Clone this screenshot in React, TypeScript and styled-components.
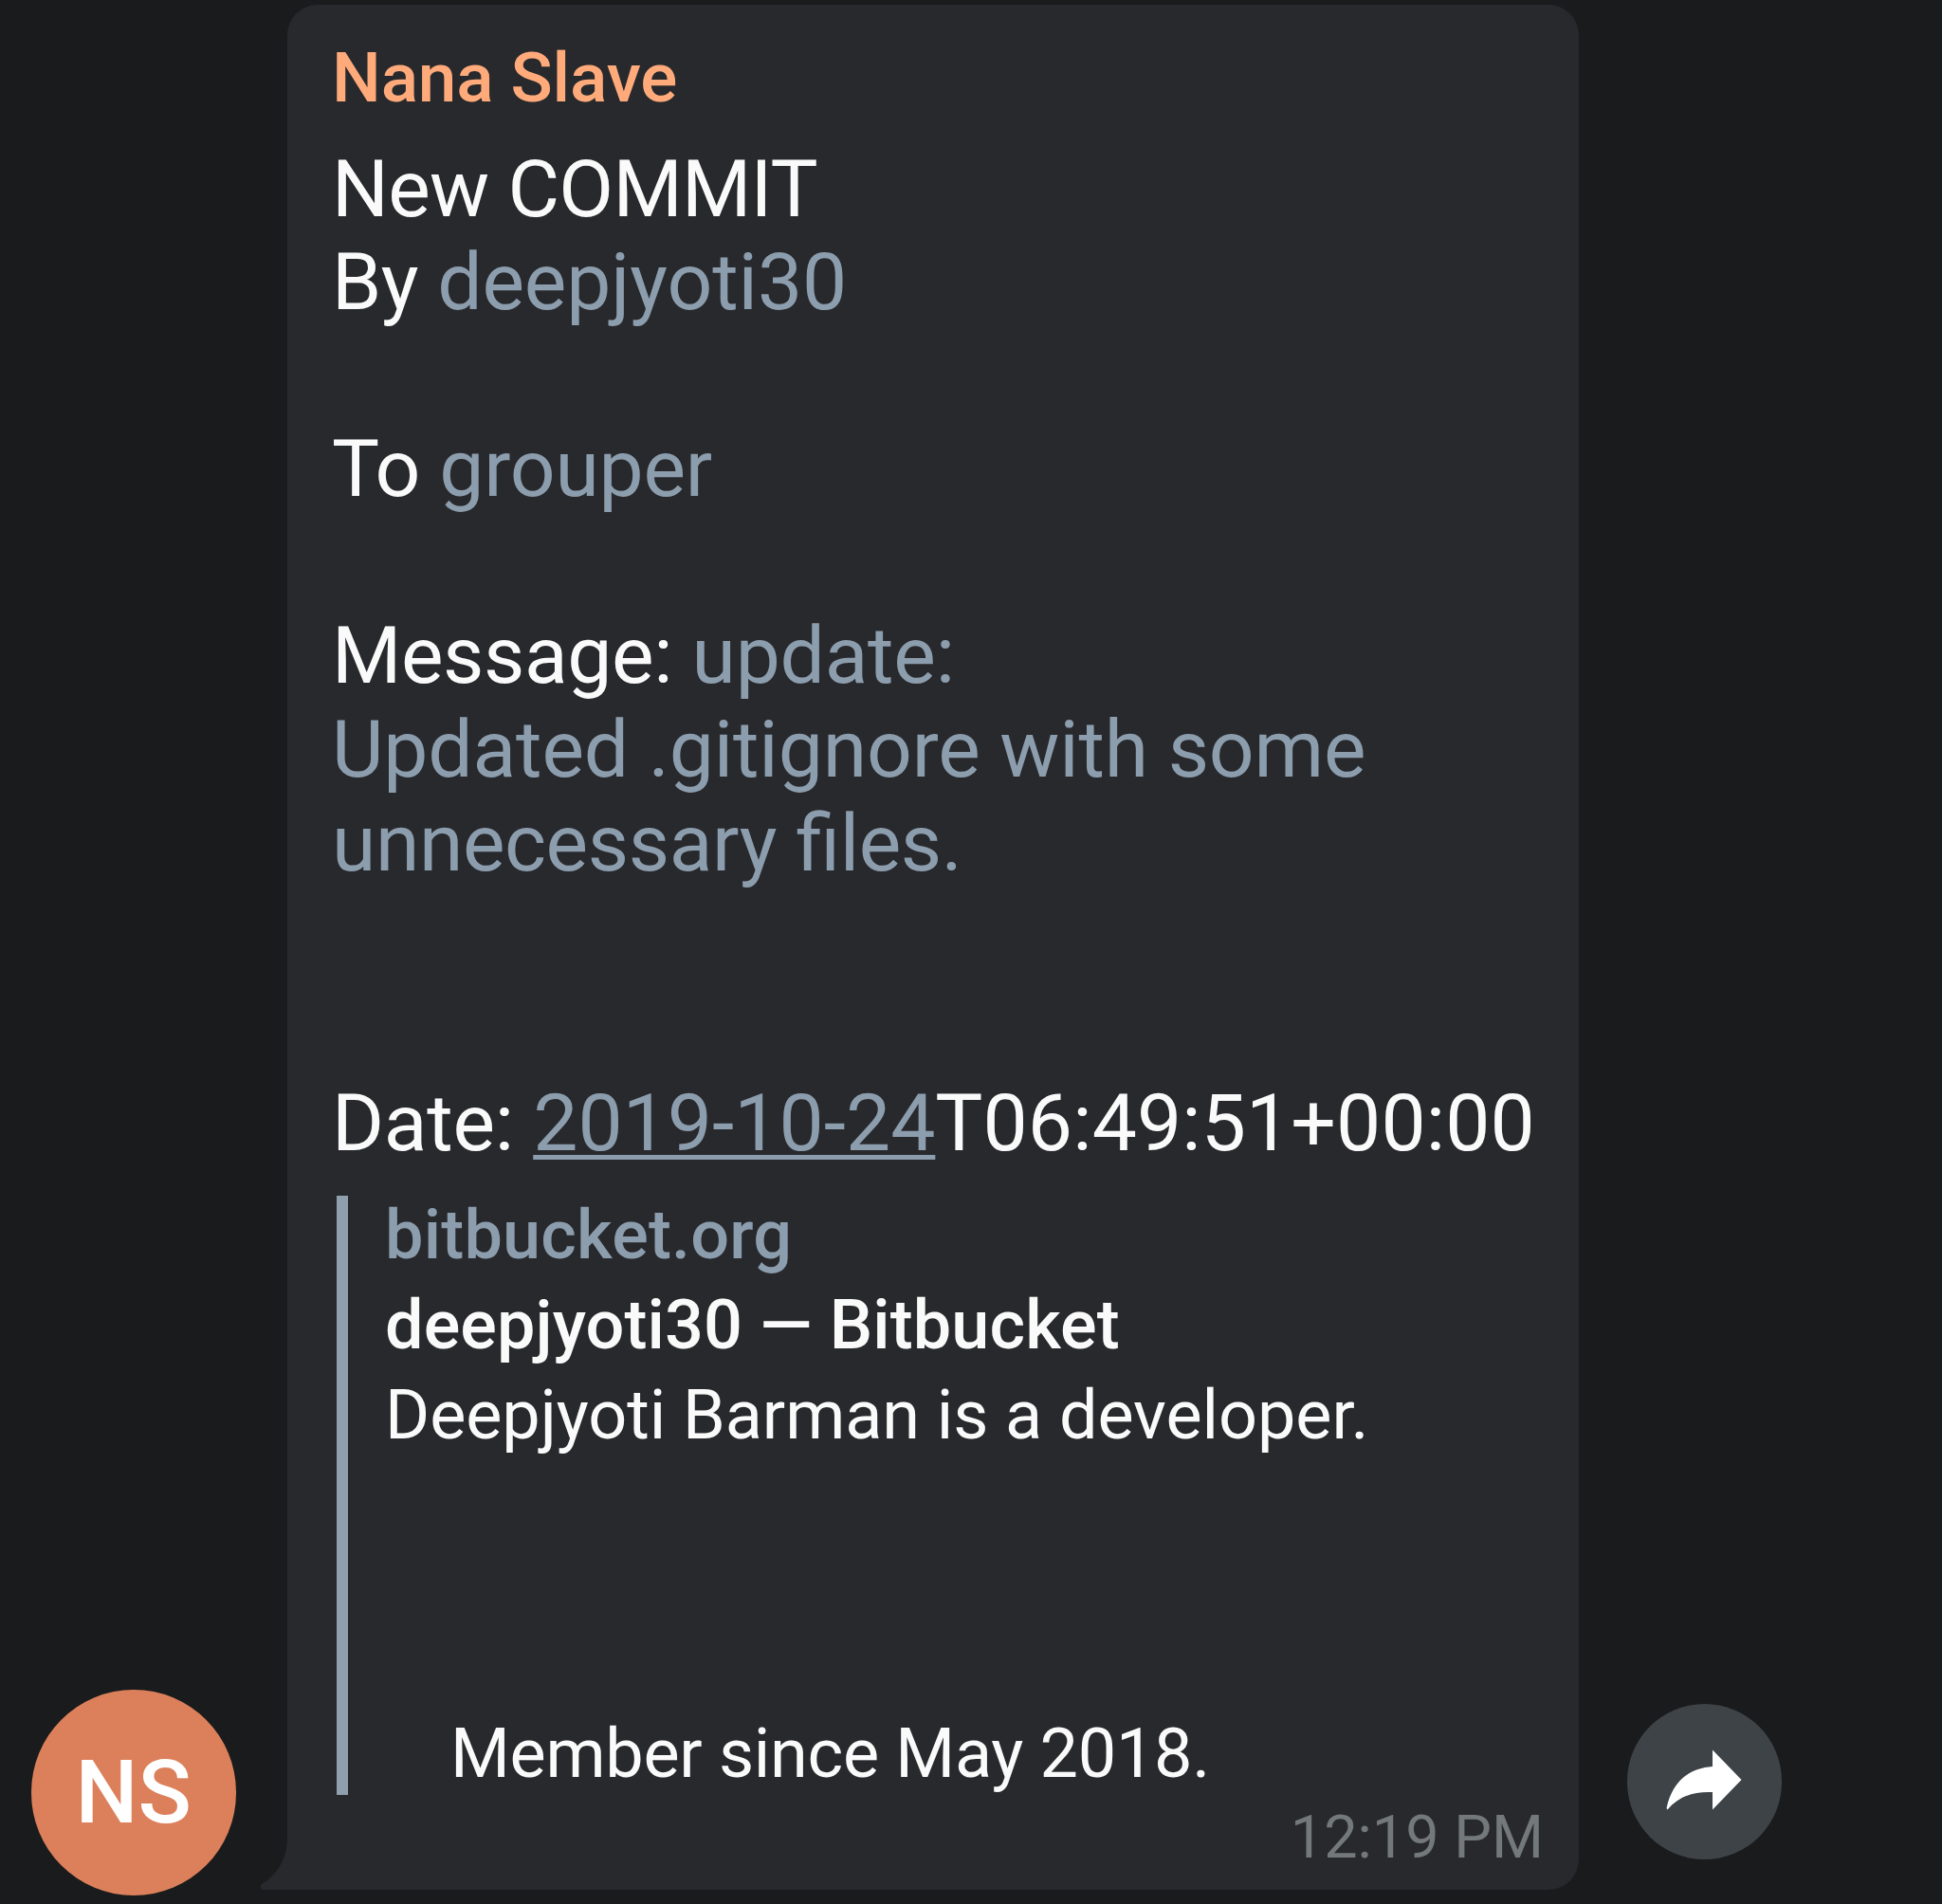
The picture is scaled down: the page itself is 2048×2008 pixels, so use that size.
import React from "react";
import styled, { createGlobalStyle } from "styled-components";

const Global = createGlobalStyle`
  * { box-sizing: border-box; }
  body { margin: 0; background: #1a1b1c; font-family: Roboto, sans-serif; }
`;

const Chat = styled.main`
  width: 2048px;
  height: 2008px;
  padding-top: 5px;
  display: flex;
  align-items: flex-start;
  overflow: hidden;
`;

const Avatar = styled.div`
  width: 216.5px;
  height: 216.5px;
  margin: 1777px 54px 0 32.5px;
  padding-top: 1px;
  flex: none;
  border-radius: 50%;
  display: flex;
  align-items: center;
  justify-content: center;
  background: #dc805b;
  color: #fff;
  font-size: 93px;
  font-weight: 500;
`;

const Bubble = styled.article`
  position: relative;
  width: 1361.5px;
  height: 1988.4px;
  padding: 28px 36.5px 0 47px;
  flex: none;
  border-radius: 32px 32px 32px 0;
  background: #28292d;
  color: #fafafa;
`;

const Tail = styled.svg`
  position: absolute;
  left: -29px;
  bottom: 0;
`;

const Sender = styled.div`
  height: 117.5px;
  line-height: 98px;
  font-size: 73px;
  font-weight: 500;
  letter-spacing: -0.15px;
  color: #ffaa7a;
`;

const Message = styled.div`
  font-size: 84px;
  line-height: 98.6px;
  white-space: pre;
`;

const Run = styled.span<{ $tracking?: number }>`
  letter-spacing: ${(p) => p.$tracking ?? 0}px;
  font-feature-settings: "liga" 1;
`;

const Link = styled(Run)<{ $underlined?: boolean }>`
  color: #8c9dad;
  text-decoration: ${(p) => (p.$underlined ? "underline" : "none")};
  text-decoration-thickness: 5px;
  text-underline-offset: 5px;
`;

const Preview = styled.section`
  height: 631.5px;
  margin: 26px 0 0 5px;
  padding-left: 39px;
  border-left: 12px solid #8f9fae;
  font-size: 72px;
  line-height: 94.5px;
  white-space: pre;
`;

const Site = styled.div`
  padding-bottom: 5.5px;
  line-height: 84.5px;
  font-weight: 500;
  letter-spacing: 0.2px;
  color: #8c9dad;
`;

const Title = styled.div`
  font-weight: 500;
  letter-spacing: 0.1px;
`;

const Description = styled.div`
  padding-top: 2.5px;
  line-height: 89.2px;
`;

const Time = styled.time`
  display: block;
  text-align: right;
  font-size: 63px;
  line-height: 89px;
  color: #73787b;
`;

const Share = styled.button`
  width: 163.5px;
  height: 163.5px;
  margin: 1792.2px 0 0 51.2px;
  padding: 0 0 4px;
  border: 0;
  border-radius: 50%;
  background: #3e4347;
  display: flex;
  align-items: center;
  justify-content: center;
`;

export default function App() {
  return (
    <>
      <Global />
      <Chat>
        <Avatar>NS</Avatar>
        <Bubble>
          <Tail width="30" height="54" viewBox="0 0 30 54">
            <path d="M29 0H30V54H3Q-1 52 2 48C19 38 29 20 29 0Z" fill="#28292d" />
          </Tail>
          <Sender>Nana Slave</Sender>
          <Message>
            <div><Run $tracking={-0.75}>New COMMIT</Run></div>
            <div><Run $tracking={-0.6}>By </Run><Link $tracking={-0.1}>deepjyoti30</Link></div>
            <br />
            <div><Run $tracking={-0.5}>To </Run><Link $tracking={-0.2}>grouper</Link></div>
            <br />
            <div><Run $tracking={-0.4}>Message: </Run><Link $tracking={-0.25}>update:</Link></div>
            <div><Link $tracking={-0.15}>Updated .gitignore with some</Link></div>
            <div><Link $tracking={-0.4}>unnecessary files.</Link></div>
            <br />
            <br />
            <div><Run $tracking={-0.3}>Date: </Run><Link $underlined>2019-10-24</Link><Run $tracking={0.1}>T06:49:51+00:00</Run></div>
          </Message>
          <Preview>
            <Site>bitbucket.org</Site>
            <Title>deepjyoti30 — Bitbucket</Title>
            <Description>
              <Run $tracking={-0.08}>{"Deepjyoti Barman is a developer.\n\n\n\n"}</Run>
              <Run $tracking={-0.6}>{"    "}</Run>
              <Run $tracking={-0.3}>Member since May 2018.</Run>
            </Description>
          </Preview>
          <Time>12:19 PM</Time>
        </Bubble>
        <Share aria-label="Share">
          <svg width="80" height="64" viewBox="0 0 80 64" fill="#fff">
            <path d="M49 0.5L79.5 32L49 63.5V45C30 44 14 49 1.5 63.5L0.5 62C6 36 22 20 49 18Z" />
          </svg>
        </Share>
      </Chat>
    </>
  );
}
